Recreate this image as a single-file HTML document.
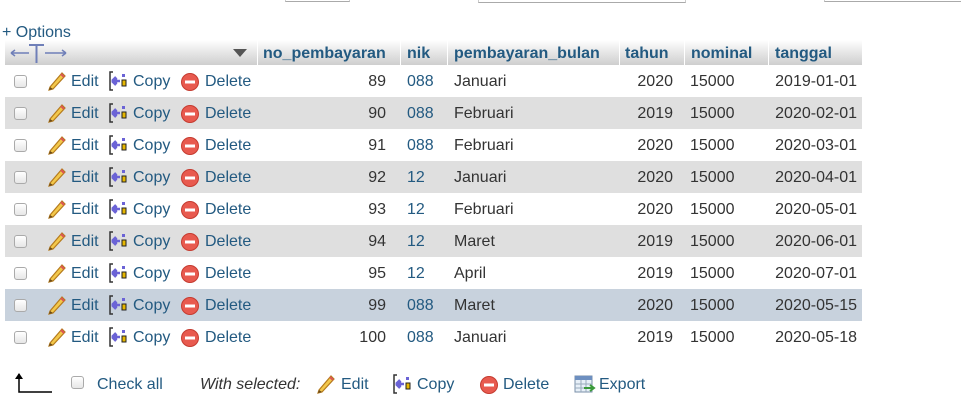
<!DOCTYPE html>
<html><head><meta charset="utf-8"><style>
*{margin:0;padding:0;box-sizing:border-box}
body{width:961px;height:406px;background:#fff;font-family:"Liberation Sans",Arial,sans-serif;font-size:16px;color:#333;position:relative;overflow:hidden}
.a{position:absolute;white-space:nowrap}
.top{position:absolute;top:0;height:2px;border-bottom:1px solid #aaa;border-left:1px solid #ccc;border-right:1px solid #ccc}
.hdr{position:absolute;top:40px;height:26px;background:linear-gradient(#fff,#ccc)}
.hdr span{position:absolute;top:5px;font-weight:bold;color:#235a81}
.row{position:absolute;left:5px;width:857px;height:32px}
.cb{position:absolute;width:13px;height:13px;border:1px solid #aaa;border-radius:3px;background:linear-gradient(#fff,#e6e6e6)}
.lk{color:#235a81}
.c{position:absolute;top:8px}
</style></head><body>
<div class="top" style="left:285px;width:65px"></div>
<div class="top" style="left:478px;width:208px;height:3px"></div>
<div class="top" style="left:824px;width:137px;border-right:none"></div>

<div class="a lk" style="left:2px;top:24px">+ Options</div>

<div class="hdr" style="left:5px;width:252px">
 <svg class="a" style="left:3px;top:2px" width="64" height="22"><path d="M3 11 H21 M3 11 L7 8 M3 11 L7 14" stroke="#6f7fb8" stroke-width="1.5" fill="none"/><path d="M21 3 H36 M28.5 3 V21" stroke="#6f7fb8" stroke-width="2" fill="none"/><path d="M37 11 H58 M58 11 L54 8 M58 11 L54 14" stroke="#6f7fb8" stroke-width="1.5" fill="none"/></svg>
 <svg class="a" style="left:228px;top:9px" width="14" height="9"><path d="M0 0 H14 L7 8 Z" fill="#555"/></svg>
</div>
<div class="hdr" style="left:258px;width:142px"><span style="left:5px">no_pembayaran</span></div>
<div class="hdr" style="left:401px;width:46px"><span style="left:6px">nik</span></div>
<div class="hdr" style="left:448px;width:171px"><span style="left:6px">pembayaran_bulan</span></div>
<div class="hdr" style="left:620px;width:64px"><span style="left:5px">tahun</span></div>
<div class="hdr" style="left:685px;width:83px"><span style="left:6px">nominal</span></div>
<div class="hdr" style="left:769px;width:93px"><span style="left:6px">tanggal</span></div>

<svg width="0" height="0" style="position:absolute">
<defs>
<g id="pen"><path d="M3 17 L15 3 L18 6 L6 19 L2 20 Z" fill="#f3c84b" stroke="#b57a1c" stroke-width="1.2"/><path d="M2 20 L3 17 L6 19 Z" fill="#6b4a1a"/><path d="M14 4 L17 7" stroke="#d55" stroke-width="2"/></g>
<g id="cp"><path d="M4 1 H1 V19 H4" stroke="#333" stroke-width="1.5" fill="none"/><path d="M3 10 H11 M3 10 L7 6 M3 10 L7 14 M7 7 V13" stroke="#6b63d6" stroke-width="2.4" fill="none"/><rect x="13" y="3" width="3" height="3" fill="#6b63d6"/><rect x="13" y="9" width="4" height="6" fill="#e6b700" stroke="#222" stroke-width="1"/></g>
<g id="dl"><circle cx="9" cy="9" r="8.5" fill="#e85a4f" stroke="#c53b30"/><rect x="4" y="7.5" width="10" height="3" fill="#fff"/></g>
</defs></svg>

<div id="rows"></div>
<script>
var d=[[89,"088","Januari",2020,"2019-01-01"],[90,"088","Februari",2019,"2020-02-01"],[91,"088","Februari",2020,"2020-03-01"],[92,"12","Januari",2020,"2020-04-01"],[93,"12","Februari",2020,"2020-05-01"],[94,"12","Maret",2019,"2020-06-01"],[95,"12","April",2019,"2020-07-01"],[99,"088","Maret",2020,"2020-05-15"],[100,"088","Januari",2019,"2020-05-18"]];
var h="";
d.forEach(function(r,i){
 var bg=i==7?"#c8d2dd":(i%2?"#dfdfdf":"#fff");
 var top=65+i*32;
 h+='<div class="row" style="top:'+top+'px;background:'+bg+'">'+
 '<div class="cb" style="left:9px;top:10px"></div>'+
 '<svg class="a" style="left:42px;top:5px" width="20" height="22"><use href="#pen"/></svg>'+
 '<span class="c lk" style="left:66px">Edit</span>'+
 '<svg class="a" style="left:104px;top:6px" width="18" height="20"><use href="#cp"/></svg>'+
 '<span class="c lk" style="left:128px">Copy</span>'+
 '<svg class="a" style="left:176px;top:8px" width="19" height="19"><use href="#dl"/></svg>'+
 '<span class="c lk" style="left:200px">Delete</span>'+
 '<span class="c" style="right:476px">'+r[0]+'</span>'+
 '<span class="c lk" style="left:402px">'+r[1]+'</span>'+
 '<span class="c" style="left:449px">'+r[2]+'</span>'+
 '<span class="c" style="right:189px">'+r[3]+'</span>'+
 '<span class="c" style="left:685px">15000</span>'+
 '<span class="c" style="right:5px">'+r[4]+'</span>'+
 '</div>';
});
document.getElementById("rows").innerHTML=h;
</script>

<svg class="a" style="left:14px;top:372px" width="40" height="22"><path d="M5 2 V20 H38" stroke="#000" stroke-width="1.5" fill="none"/><path d="M1 7 L5 1 L9 7 Z" fill="#000"/></svg>
<div class="cb" style="left:71px;top:376px"></div>
<span class="a lk" style="left:97px;top:376px">Check all</span>
<span class="a" style="left:200px;top:376px;font-style:italic">With selected:</span>
<svg class="a" style="left:316px;top:373px" width="20" height="22"><use href="#pen"/></svg>
<span class="a lk" style="left:341px;top:376px">Edit</span>
<svg class="a" style="left:393px;top:374px" width="18" height="20"><use href="#cp"/></svg>
<span class="a lk" style="left:417px;top:376px">Copy</span>
<svg class="a" style="left:480px;top:376px" width="19" height="19"><use href="#dl"/></svg>
<span class="a lk" style="left:503px;top:376px">Delete</span>
<svg class="a" style="left:574px;top:375px" width="22" height="20"><rect x="1" y="1" width="17" height="16" fill="#e8f0f8" stroke="#7a8fa8"/><rect x="1" y="1" width="17" height="4" fill="#6d8fc0"/><path d="M1 9 H18 M1 13 H18 M7 5 V17 M12 5 V17" stroke="#9ab" stroke-width="1"/><path d="M10 13 H19 M16 10 L20 13 L16 16" stroke="#3a9a3a" stroke-width="2" fill="none"/></svg>
<span class="a lk" style="left:599px;top:376px">Export</span>
</body></html>
